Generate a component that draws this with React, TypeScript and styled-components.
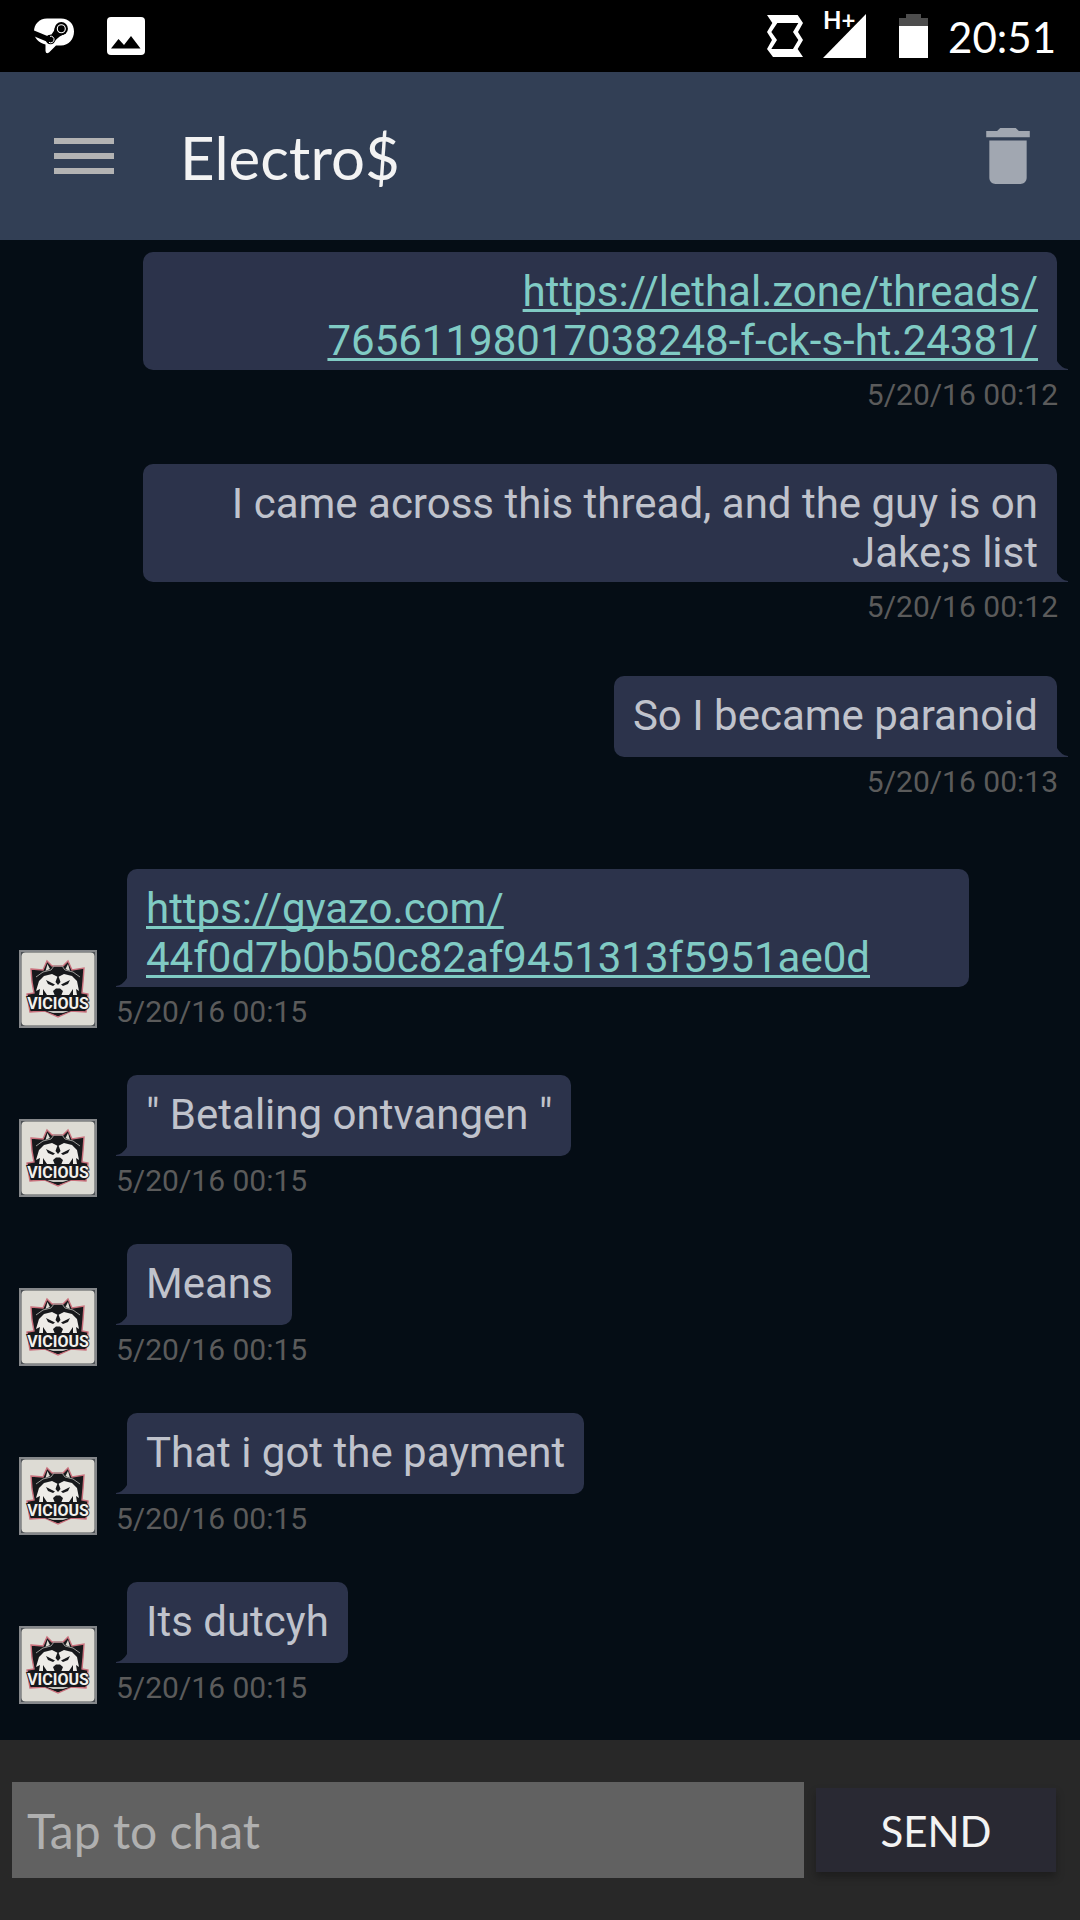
import React, { useState } from "react";
import styled, { createGlobalStyle } from "styled-components";

const GlobalStyle = createGlobalStyle`
  *, *::before, *::after { box-sizing: border-box; }
  body { margin: 0; background: #050d15; }
`;

const Screen = styled.div`
  display: flex;
  flex-direction: column;
  min-height: 100vh;
  background: #050d15;
  font-family: Roboto, "Noto Sans", sans-serif;
`;

const StatusBar = styled.div`
  display: flex;
  align-items: center;
  justify-content: space-between;
  height: 72px;
  padding: 2px 24px 0 34px;
  background: #000;
  color: #fff;
`;

const StatusGroup = styled.div<{ $gap: number }>`
  display: flex;
  align-items: center;
  gap: ${(p) => p.$gap}px;
`;

const Clock = styled.time`
  font: 42px/48px Lato, sans-serif;
`;

const StatusIcon = styled.svg`
  display: block;
  flex: none;
`;

const Header = styled.header`
  display: flex;
  align-items: center;
  height: 168px;
  padding: 0 50px 0 54px;
  background: #323f55;
`;

const IconButton = styled.button`
  display: block;
  padding: 0;
  border: 0;
  background: none;
  cursor: pointer;

  svg { display: block; }
`;

const Title = styled.h1`
  flex: 1;
  margin: 0;
  padding: 2px 0 0 66px;
  color: #f3f3f3;
  font: 400 60px/72px Lato, sans-serif;
`;

const Thread = styled.ol`
  flex: 1;
  margin: 0;
  padding: 0 12px 0 0;
  list-style: none;
`;

const Row = styled.li<{ $mine: boolean }>`
  display: flex;
  align-items: flex-end;
  gap: 19px;
  justify-content: ${(p) => (p.$mine ? "flex-end" : "flex-start")};
  padding: ${(p) => (p.$mine ? "12px 0 40px 143px" : "30px 99px 16px 19px")};
`;

const Entry = styled.div<{ $mine: boolean }>`
  display: flex;
  flex-direction: column;
  align-items: ${(p) => (p.$mine ? "flex-end" : "flex-start")};
  min-width: 0;
`;

const Bubble = styled.div<{ $mine: boolean }>`
  position: relative;
  min-height: 81px;
  margin: ${(p) => (p.$mine ? "0 11px 0 0" : "0 0 0 11px")};
  padding: 15px 19px 5px;
  border-radius: ${(p) => (p.$mine ? "10px 10px 0 10px" : "10px 10px 10px 0")};
  background: #2c334b;
  color: #c0c3cc;
  font-size: 42px;
  line-height: 49px;
  text-align: ${(p) => (p.$mine ? "right" : "left")};
`;

const Tail = styled.svg<{ $mine: boolean }>`
  position: absolute;
  bottom: 0;
  ${(p) => (p.$mine ? "left: 100%;" : "right: 100%; transform: scaleX(-1);")}
`;

const MessageLink = styled.a`
  color: #80cbc4;
  text-decoration: underline;
  text-decoration-thickness: 3px;
  text-decoration-skip-ink: none;
  text-underline-offset: 3px;
`;

const Stamp = styled.time<{ $mine: boolean }>`
  padding: ${(p) => (p.$mine ? "7px 10px 0 0" : "7px 0 0 0")};
  color: #5b5b5b;
  font-size: 30px;
  line-height: 35px;
`;

const Avatar = styled.svg`
  display: block;
  flex: none;
  margin-bottom: 1px;
`;

const Composer = styled.form`
  display: flex;
  align-items: center;
  gap: 12px;
  height: 180px;
  padding: 0 24px 0 12px;
  background: #282828;
`;

const ChatInput = styled.input`
  flex: 1;
  min-width: 0;
  height: 96px;
  padding: 0 15px;
  border: 0;
  border-radius: 0;
  outline: 0;
  background: #616161;
  color: #f3f3f3;
  font: 48px/58px Lato, sans-serif;

  &::placeholder { color: #b0b0b0; opacity: 1; }
`;

const SendButton = styled.button`
  width: 240px;
  height: 84px;
  padding: 2px 0 0;
  border: 0;
  background: #292933;
  box-shadow: 0 5px 8px rgba(0, 0, 0, 0.28);
  color: #f3f3f3;
  font: 42px/48px Lato, sans-serif;
  cursor: pointer;
`;

const SteamChatIcon = () => (
  <StatusIcon width="40" height="48" viewBox="34 13 40 48" aria-hidden="true">
    <path
      fill="#fff"
      d="M47 18.500H61C69 18.500 74 24 74 31.500S69 45.500 61 45.500H56L49 52.500Q46 54.500 45.500 51V44.500C39 43 34 38.500 34 31.500S39 18.500 47 18.500Z"
    />
    <path stroke="#000" strokeWidth="5.400" d="M33 33L50 40" />
    <path fill="#000" d="M47 36L51.500 34.500Q54.500 31 55 27L66 33Q59 36 55 41L50 44Z" />
    <circle cx="50.500" cy="39.500" r="4.800" fill="#000" />
    <circle cx="61.300" cy="28.700" r="6.600" fill="#000" />
    <circle cx="61.300" cy="28.700" r="4" fill="none" stroke="#fff" strokeWidth="1.100" />
    <path fill="none" stroke="#fff" strokeWidth="1" d="M50 36.300A3.300 3.300 0 1 1 49 42.300" />
  </StatusIcon>
);

const PictureIcon = () => (
  <StatusIcon width="38" height="48" viewBox="107 13 38 48" aria-hidden="true">
    <rect x="107" y="17" width="38" height="38" rx="4" fill="#fff" />
    <path fill="#000" d="M111 48.500L118.500 39L124 45L131 36L140.500 48.500Z" />
  </StatusIcon>
);

const RotateIcon = () => (
  <StatusIcon width="36" height="48" viewBox="198 39 108 144" aria-hidden="true">
    <path
      fill="#fff"
      fillRule="evenodd"
      d="M198 45H290L306 69L291 96L306 120L290 147L306 171H216L198 147L213 120L198 96L214 69ZM229 69L211 96L228 120L211 147H276L292 120L276 96L292 69Z"
    />
  </StatusIcon>
);

const SignalIcon = () => (
  <StatusIcon width="43" height="68" viewBox="823 3 43 68" role="img" aria-label="H+ signal">
    <path fill="#fff" d="M823 58L866 14V58Z" />
    <text x="823" y="29" fill="#fff" fontFamily="Lato, sans-serif" fontSize="24" fontWeight="700">
      H+
    </text>
  </StatusIcon>
);

const BatteryIcon = () => (
  <StatusIcon width="29" height="48" viewBox="0 13 29 48" role="img" aria-label="Battery">
    <path fill="#4d4d4d" d="M7 14H22V18H29V26H0V18H7Z" />
    <path fill="#fff" d="M0 26H29V58H0Z" />
  </StatusIcon>
);

const ViciousAvatar = () => (
  <Avatar width="78" height="78" viewBox="0 0 78 78" role="img" aria-label="Vicious">
    <rect width="78" height="78" fill="#85878a" />
    <rect x="2" y="2" width="74" height="74" fill="#4c5054" />
    <rect x="2.500" y="2.500" width="73" height="73" rx="4" fill="#dddbd4" />
    <path
      fill="#17181b"
      stroke="#c9707c"
      strokeWidth="1.400"
      d="M12 19L24 20L28 11L33 16H44L49 11L53 20L65 18L64 32L63 43L69 44L67 62L52 61L39 67L26 61L11 62L8 44L15 43L13 32Z"
    />
    <path fill="#dddbd4" d="M26.500 21L28.500 14L31 19ZM46.500 19L49 14L51 21Z" />
    <path fill="none" stroke="#9d9c99" strokeWidth="1" d="M17 27L24 22L32 20L35 16H43L46 20L54 22L61 27" />
    <path
      fill="#eeece8"
      d="M20 31L25 26L33 24L39 27L45 24L53 26L58 31L60 41L57 39L58 45H20L21 39L17 41Z"
    />
    <path fill="#17181b" d="M39 25L41.500 32L39 35L36.500 32Z" />
    <path fill="#17181b" d="M27 30L36 34.500L34 36L29 34ZM51 30L42 34.500L44 36L49 34Z" />
    <path fill="#17181b" d="M34 41L37 38.500H41L44 41L42 46H36ZM24 39L28 45H24ZM54 39L50 45H54Z" />
    <path fill="#17181b" d="M10 46L68 45L66 61H52L39 66L26 61H12Z" />
    <path fill="#c4c2be" d="M28 61L50 61L44 63H34Z" />
    <text
      x="39"
      y="59"
      fill="#f2f0ec"
      stroke="#17181b"
      strokeWidth="2"
      paintOrder="stroke"
      fontFamily="'Liberation Sans Narrow', Roboto, sans-serif"
      fontSize="16"
      fontWeight="700"
      textAnchor="middle"
    >
      VICIOUS
    </text>
  </Avatar>
);

type Message = { mine: boolean; time: string; text?: string; link?: string[] };

const messages: Message[] = [
  { mine: true, time: "5/20/16 00:12", link: ["https://lethal.zone/threads/", "76561198017038248-f-ck-s-ht.24381/"] },
  { mine: true, time: "5/20/16 00:12", text: "I came across this thread, and the guy is on Jake;s list" },
  { mine: true, time: "5/20/16 00:13", text: "So I became paranoid" },
  { mine: false, time: "5/20/16 00:15", link: ["https://gyazo.com/", "44f0d7b0b50c82af9451313f5951ae0d"] },
  { mine: false, time: "5/20/16 00:15", text: "\" Betaling ontvangen \"" },
  { mine: false, time: "5/20/16 00:15", text: "Means" },
  { mine: false, time: "5/20/16 00:15", text: "That i got the payment" },
  { mine: false, time: "5/20/16 00:15", text: "Its dutcyh" },
];

const ChatMessage = ({ mine, time, text, link }: Message) => (
  <Row $mine={mine}>
    {!mine && <ViciousAvatar />}
    <Entry $mine={mine}>
      <Bubble $mine={mine}>
        {link ? (
          <MessageLink href={link.join("")}>
            {link[0]}
            <wbr />
            {link[1]}
          </MessageLink>
        ) : (
          text
        )}
        <Tail $mine={mine} width="11" height="9" viewBox="0 0 11 9" aria-hidden="true">
          <path fill="#2c334b" d="M0 0Q4 7 11 8V9H0Z" />
        </Tail>
      </Bubble>
      <Stamp $mine={mine}>{time}</Stamp>
    </Entry>
  </Row>
);

export default function App() {
  const [draft, setDraft] = useState("");

  return (
    <Screen>
      <GlobalStyle />
      <StatusBar>
        <StatusGroup $gap={33}>
          <SteamChatIcon />
          <PictureIcon />
        </StatusGroup>
        <StatusGroup $gap={20}>
          <RotateIcon />
          <StatusGroup $gap={33}>
            <SignalIcon />
            <BatteryIcon />
          </StatusGroup>
          <Clock>20:51</Clock>
        </StatusGroup>
      </StatusBar>
      <Header>
        <IconButton type="button" aria-label="Menu">
          <svg width="60" height="36" viewBox="0 0 60 36" fill="#b3b3b3" aria-hidden="true">
            <path d="M0 0H60V6H0ZM0 15H60V21H0ZM0 30H60V36H0Z" />
          </svg>
        </IconButton>
        <Title>Electro$</Title>
        <IconButton type="button" aria-label="Delete conversation">
          <svg width="44" height="56" viewBox="5 3 14 18" fill="#a1a7b1" aria-hidden="true">
            <path d="M6 19c0 1.100.9 2 2 2h8c1.100 0 2-.9 2-2V7H6v12zM19 4h-3.500l-1-1h-5l-1 1H5v2h14V4z" />
          </svg>
        </IconButton>
      </Header>
      <Thread>
        {messages.map((message, index) => (
          <ChatMessage key={index} {...message} />
        ))}
      </Thread>
      <Composer onSubmit={(event) => event.preventDefault()}>
        <ChatInput
          aria-label="Chat message"
          placeholder="Tap to chat"
          value={draft}
          onChange={(event) => setDraft(event.target.value)}
        />
        <SendButton type="submit">SEND</SendButton>
      </Composer>
    </Screen>
  );
}
